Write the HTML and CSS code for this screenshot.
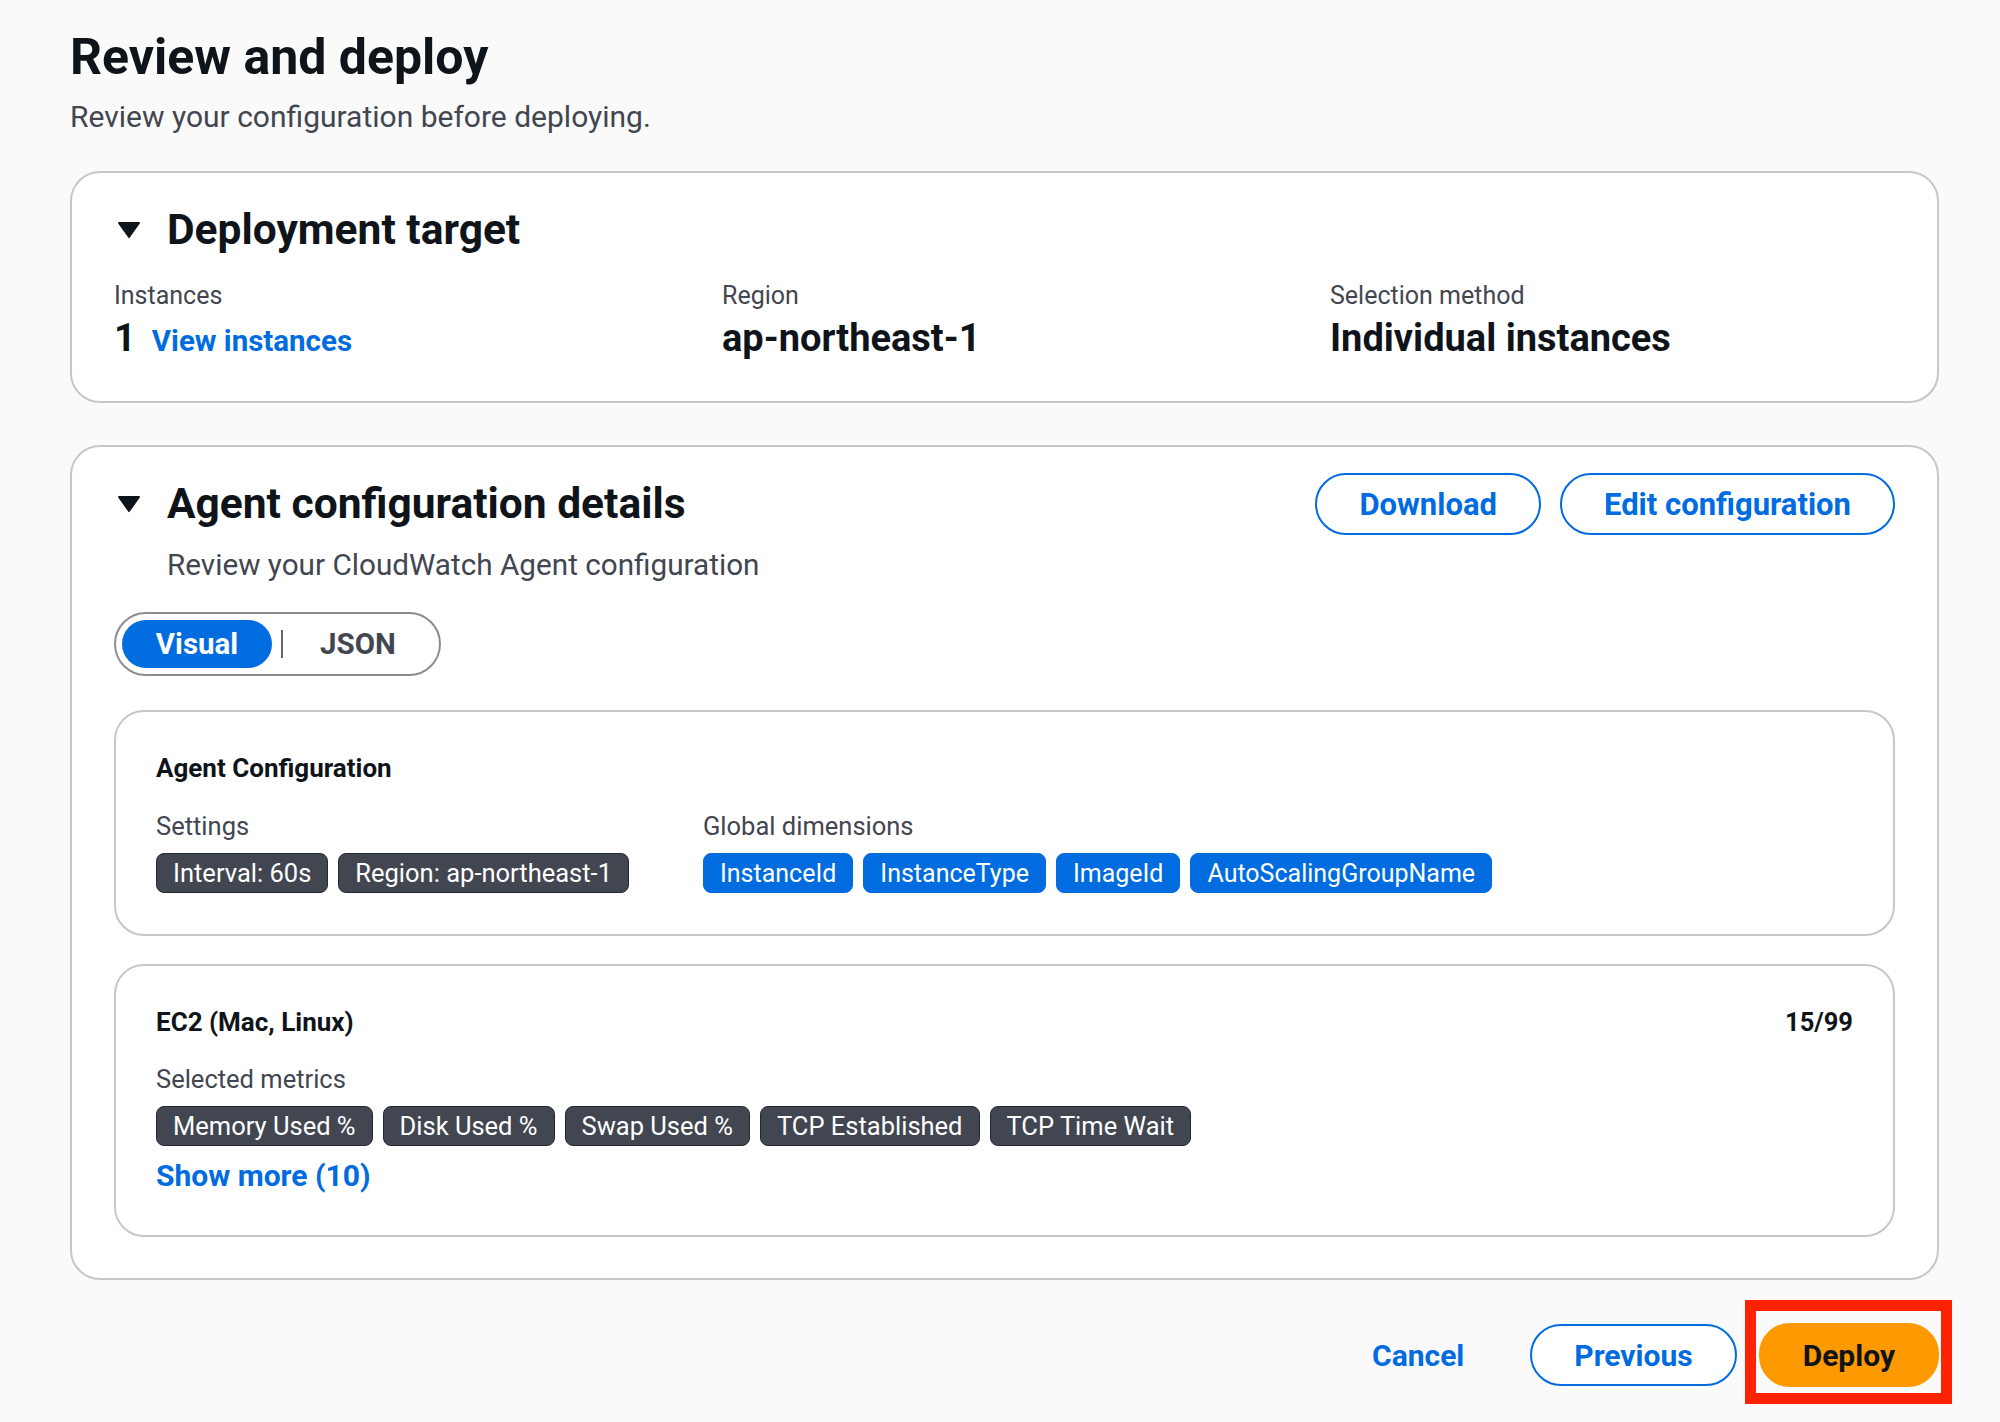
FILE: index.html
```html
<!DOCTYPE html>
<html lang="en">
<head>
    <meta charset="UTF-8">
    <title>Review and deploy</title>
    <link rel="stylesheet" href="styles.css">
</head>
<body>
    <div class="page">
        <h1 class="page-title">Review and deploy</h1>
        <p class="page-desc">Review your configuration before deploying.</p>

        <!-- Deployment target -->
        <section class="card">
            <div class="card-header">
                <div class="card-title">
                    <svg class="caret" viewBox="0 0 24 18"><path d="M2 1h20a1 1 0 0 1 .8 1.6l-10 14a1 1 0 0 1-1.6 0l-10-14A1 1 0 0 1 2 1z"/></svg>
                    <h2>Deployment target</h2>
                </div>
            </div>
            <div class="kv-grid">
                <div class="kv">
                    <div class="kv-label">Instances</div>
                    <div class="kv-value"><span>1</span> <a href="#" class="link">View instances</a></div>
                </div>
                <div class="kv">
                    <div class="kv-label">Region</div>
                    <div class="kv-value">ap-northeast-1</div>
                </div>
                <div class="kv">
                    <div class="kv-label">Selection method</div>
                    <div class="kv-value">Individual instances</div>
                </div>
            </div>
        </section>

        <!-- Agent configuration -->
        <section class="card card-agent">
            <div class="card-header">
                <div class="card-title">
                    <svg class="caret" viewBox="0 0 24 18"><path d="M2 1h20a1 1 0 0 1 .8 1.6l-10 14a1 1 0 0 1-1.6 0l-10-14A1 1 0 0 1 2 1z"/></svg>
                    <h2>Agent configuration details</h2>
                </div>
                <div class="actions">
                    <button class="btn">Download</button>
                    <button class="btn">Edit configuration</button>
                </div>
            </div>
            <p class="card-desc">Review your CloudWatch Agent configuration</p>

            <div class="segmented">
                <button class="seg seg-active">Visual</button>
                <span class="seg-divider"></span>
                <button class="seg">JSON</button>
            </div>

            <div class="panel">
                <div class="panel-head">
                    <h3>Agent Configuration</h3>
                </div>
                <div class="groups">
                    <div class="group">
                        <div class="group-label">Settings</div>
                        <div class="tags">
                            <span class="tag">Interval: 60s</span>
                            <span class="tag">Region: ap-northeast-1</span>
                        </div>
                    </div>
                    <div class="group">
                        <div class="group-label">Global dimensions</div>
                        <div class="tags">
                            <span class="tag tag-blue">InstanceId</span>
                            <span class="tag tag-blue">InstanceType</span>
                            <span class="tag tag-blue">ImageId</span>
                            <span class="tag tag-blue">AutoScalingGroupName</span>
                        </div>
                    </div>
                </div>
            </div>

            <div class="panel panel-metrics">
                <div class="panel-head">
                    <h3>EC2 (Mac, Linux)</h3>
                    <span class="count">15/99</span>
                </div>
                <div class="group">
                    <div class="group-label">Selected metrics</div>
                    <div class="tags">
                        <span class="tag">Memory Used %</span>
                        <span class="tag">Disk Used %</span>
                        <span class="tag">Swap Used %</span>
                        <span class="tag">TCP Established</span>
                        <span class="tag">TCP Time Wait</span>
                    </div>
                </div>
                <a href="#" class="link show-more">Show more (10)</a>
            </div>
        </section>

        <div class="footer">
            <button class="btn btn-link">Cancel</button>
            <button class="btn">Previous</button>
            <!-- red annotation box round the primary action -->
            <div class="highlight">
                <button class="btn btn-primary">Deploy</button>
            </div>
        </div>
    </div>
</body>
</html>
```

FILE: styles.css
```css
body {
    margin: 0;
    background-color: #fafafa;
    font-family: Roboto, "Liberation Sans", sans-serif;
    color: #0f141a;
}

.page {
    padding: 30px 61px 30px 70px;
}

.page-title {
    margin: 0;
    font-size: 50px;
    line-height: 54px;
    font-weight: 700;
}

.page-desc {
    margin: 15px 0 0;
    font-size: 30px;
    line-height: 36px;
    color: #424650;
}

.card {
    margin-top: 36px;
    background-color: #fff;
    border: 2px solid #c6c6cd;
    border-radius: 30px;
    padding: 26px 42px 41px;
}

.card-agent {
    margin-top: 42px;
    padding-bottom: 41px;
}

.card-header {
    display: flex;
    justify-content: space-between;
    align-items: center;
    height: 62px;
}

.card-title {
    display: flex;
    align-items: center;
}

.caret {
    width: 24px;
    height: 18px;
    margin-left: 3px;
    margin-right: 26px;
    fill: #0f141a;
}

.card-title h2 {
    margin: 0;
    font-size: 42.5px;
    line-height: 44px;
    font-weight: 700;
}

.kv-grid {
    display: grid;
    grid-template-columns: repeat(3, 1fr);
    column-gap: 43px;
    margin-top: 18px;
}

.kv-label {
    font-size: 25px;
    line-height: 34px;
    color: #424650;
}

.kv-value {
    display: flex;
    align-items: baseline;
    height: 44px;
    margin-top: 3px;
    font-size: 38px;
    line-height: 44px;
    font-weight: 700;
}

.kv-value span {
    margin-right: 16px;
}

.link {
    color: #006ce0;
    text-decoration: none;
    font-weight: 700;
    font-size: 29.5px;
}

.actions {
    display: flex;
    gap: 19px;
}

.btn {
    height: 62px;
    padding: 0 42px;
    border: 2px solid #006ce0;
    border-radius: 31px;
    background-color: #fff;
    color: #006ce0;
    font-family: inherit;
    font-size: 30px;
    font-weight: 700;
    cursor: pointer;
}

.actions .btn {
    font-size: 31px;
}

.card-desc {
    margin: 12px 0 0;
    padding-left: 53px;
    font-size: 29.7px;
    line-height: 36px;
    color: #424650;
}

.segmented {
    display: inline-flex;
    align-items: center;
    margin-top: 29px;
    padding: 6px;
    border: 2px solid #8c8c94;
    border-radius: 32px;
}

.seg {
    width: 150px;
    height: 48px;
    border: none;
    border-radius: 24px;
    background: none;
    font-family: inherit;
    font-size: 29.5px;
    font-weight: 700;
    color: #424650;
}

.seg-active {
    background-color: #006ce0;
    color: #fff;
}

.seg-divider {
    width: 2px;
    height: 28px;
    margin-left: 9px;
    background-color: #656871;
}

.panel {
    margin-top: 34px;
    border: 2px solid #c6c6cd;
    border-radius: 30px;
    padding: 39px 40px 41px;
}

.panel-metrics {
    margin-top: 28px;
    padding-bottom: 41px;
}

.panel-head {
    display: flex;
    justify-content: space-between;
    align-items: center;
}

.panel-head h3 {
    margin: 0;
    font-size: 26px;
    line-height: 34px;
    font-weight: 700;
}

.count {
    font-size: 25.5px;
    font-weight: 700;
}

.groups {
    display: grid;
    grid-template-columns: 547px auto;
}

.group-label {
    margin-top: 24px;
    font-size: 25.5px;
    line-height: 34px;
    color: #424650;
}

.panel-metrics .group-label {
    margin-top: 23px;
}

.tags {
    display: flex;
    gap: 10px;
    margin-top: 10px;
}

.tag {
    display: inline-flex;
    align-items: center;
    box-sizing: border-box;
    height: 40px;
    padding: 0 16px;
    border: 1px solid #232831;
    border-radius: 8px;
    background-color: #424650;
    color: #fff;
    font-size: 25.5px;
}

.tag-blue {
    border-color: #006ce0;
    background-color: #006ce0;
    font-size: 25px;
}

.show-more {
    display: block;
    margin-top: 12px;
    line-height: 36px;
    font-size: 30px;
}

.footer {
    display: flex;
    justify-content: flex-end;
    align-items: center;
    gap: 22px;
    margin-top: 43px;
}

.btn-link {
    border-color: transparent;
    background: none;
}

.btn-primary {
    height: 64px;
    border-color: #ff9900;
    background-color: #ff9900;
    color: #0f141a;
}

.highlight {
    display: flex;
    margin: -23px -13px -17px -14px;
    padding: 12px 2px 6px 3px;
    border: 11px solid #ff2200;
}
```
